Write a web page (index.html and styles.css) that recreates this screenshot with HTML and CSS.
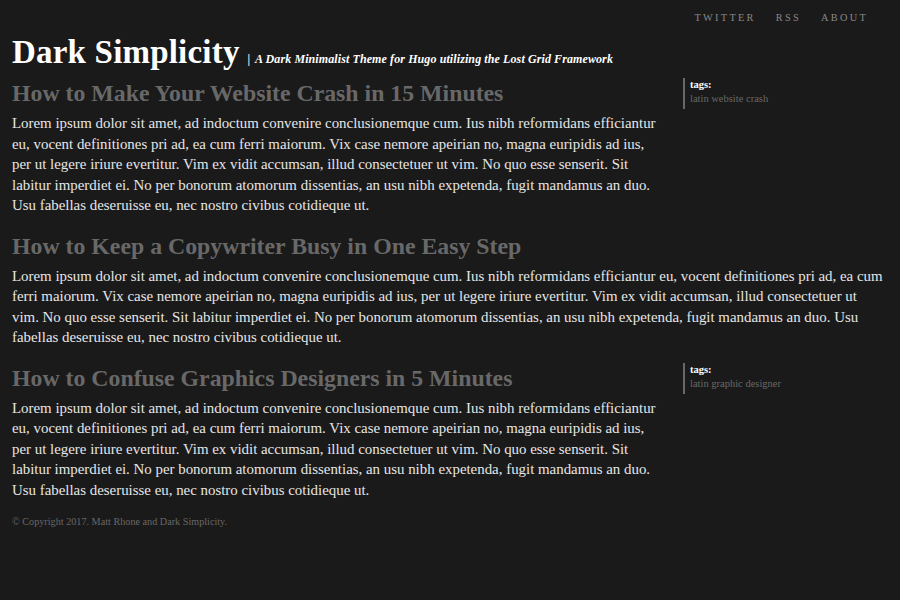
FILE: index.html
```html
<!DOCTYPE html>
<html>
<head>
<meta charset="utf-8">
<link rel="stylesheet" href="styles.css">
</head>
<body>
<header class="site-header">
  <nav class="nav">
    <a href="#">Twitter</a>
    <a href="#">RSS</a>
    <a href="#">About</a>
  </nav>
  <div class="brand">
    <h1 class="site-title">Dark Simplicity</h1>
    <span class="tagline"><span class="bar">|</span> A Dark Minimalist Theme for Hugo utilizing the Lost Grid Framework</span>
  </div>
</header>
<main>
  <article class="post">
    <div class="post-body">
      <h2 class="post-title">How to Make Your Website Crash in 15 Minutes</h2>
      <p>Lorem ipsum dolor sit amet, ad indoctum convenire conclusionemque cum. Ius nibh reformidans efficiantur eu, vocent definitiones pri ad, ea cum ferri maiorum. Vix case nemore apeirian no, magna euripidis ad ius, per ut legere iriure evertitur. Vim ex vidit accumsan, illud consectetuer ut vim. No quo esse senserit. Sit labitur imperdiet ei. No per bonorum atomorum dissentias, an usu nibh expetenda, fugit mandamus an duo. Usu fabellas deseruisse eu, nec nostro civibus cotidieque ut.</p>
    </div>
    <aside class="tags">
      <div class="tags-label">tags:</div>
      <div class="tags-list">latin website crash</div>
    </aside>
  </article>
  <article class="post">
    <div class="post-body full">
      <h2 class="post-title">How to Keep a Copywriter Busy in One Easy Step</h2>
      <p>Lorem ipsum dolor sit amet, ad indoctum convenire conclusionemque cum. Ius nibh reformidans efficiantur eu, vocent definitiones pri ad, ea cum ferri maiorum. Vix case nemore apeirian no, magna euripidis ad ius, per ut legere iriure evertitur. Vim ex vidit accumsan, illud consectetuer ut vim. No quo esse senserit. Sit labitur imperdiet ei. No per bonorum atomorum dissentias, an usu nibh expetenda, fugit mandamus an duo. Usu fabellas deseruisse eu, nec nostro civibus cotidieque ut.</p>
    </div>
  </article>
  <article class="post">
    <div class="post-body">
      <h2 class="post-title">How to Confuse Graphics Designers in 5 Minutes</h2>
      <p>Lorem ipsum dolor sit amet, ad indoctum convenire conclusionemque cum. Ius nibh reformidans efficiantur eu, vocent definitiones pri ad, ea cum ferri maiorum. Vix case nemore apeirian no, magna euripidis ad ius, per ut legere iriure evertitur. Vim ex vidit accumsan, illud consectetuer ut vim. No quo esse senserit. Sit labitur imperdiet ei. No per bonorum atomorum dissentias, an usu nibh expetenda, fugit mandamus an duo. Usu fabellas deseruisse eu, nec nostro civibus cotidieque ut.</p>
    </div>
    <aside class="tags">
      <div class="tags-label">tags:</div>
      <div class="tags-list">latin graphic designer</div>
    </aside>
  </article>
</main>
<footer class="footer">© Copyright 2017. Matt Rhone and Dark Simplicity.</footer>
</body>
</html>
```
FILE: styles.css
```css
html, body {
  margin: 0;
  padding: 0;
  background: #1a1a1a;
  height: 100%;
}
body {
  font-family: "Liberation Serif", "DejaVu Serif", serif;
  color: #e6e6e6;
  padding: 0 12px;
}
.site-header {
  display: flex;
  flex-direction: column;
}
.nav {
  display: flex;
  justify-content: flex-end;
  gap: 20px;
  padding: 10px 20px 0 0;
  height: 16px;
}
.nav a {
  color: #888888;
  text-decoration: none;
  text-transform: uppercase;
  font-size: 10.3px;
  letter-spacing: 2.3px;
  line-height: 16px;
}
.brand {
  display: flex;
  align-items: baseline;
  gap: 8px;
  margin-top: 7px;
}
.site-title {
  margin: 0;
  font-size: 33px;
  font-weight: 600;
  color: #ffffff;
  line-height: 38px;
  letter-spacing: 0.2px;
}
.tagline {
  font-size: 12px;
  font-style: italic;
  font-weight: bold;
  color: #ffffff;
  letter-spacing: 0.1px;
}
.bar {
  font-style: normal;
  margin-right: 2px;
}
main {
  margin-top: 7px;
}
.post {
  display: flex;
  gap: 21px;
  align-items: flex-start;
}
.post-body {
  width: 650px;
  flex: none;
}
.post-body.full {
  width: auto;
  flex: 1;
  margin-right: 4px;
}
.post-title {
  margin: 0;
  font-size: 23.8px;
  line-height: 30px;
  color: #686868;
  font-weight: bold;
}
.post p {
  margin: 5px 0 15px;
  font-size: 14.9px;
  line-height: 20.5px;
}
.tags {
  border-left: 2px solid #686868;
  padding: 0 0 3px 5px;
  font-size: 10.5px;
  line-height: 14px;
}
.tags-label {
  color: #ffffff;
  font-weight: bold;
}
.tags-list {
  color: #686868;
}
.footer {
  font-size: 10.2px;
  line-height: 14px;
  color: #686868;
}
```
